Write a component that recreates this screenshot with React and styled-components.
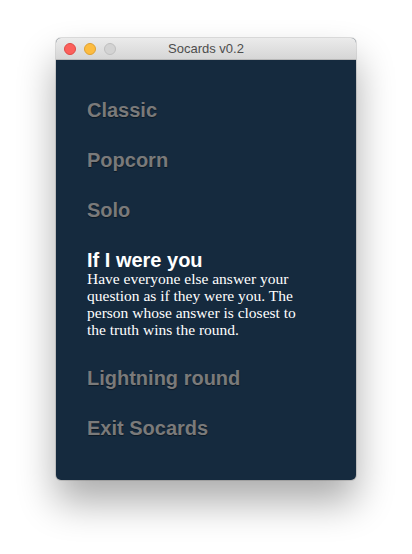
import React, {useState} from "react";
import styled, {createGlobalStyle} from "styled-components";

const GlobalStyle = createGlobalStyle`
    html, body {
        margin: 0;
        padding: 0;
        background: #ffffff;
    }
`;

const Page = styled.div`
    width: 412px;
    height: 554px;
    padding: 38px 0 0 56px;
    box-sizing: border-box;
    background: #ffffff;
`;

const Window = styled.div`
    width: 300px;
    height: 442px;
    border-radius: 5px;
    overflow: hidden;
    display: flex;
    flex-direction: column;
    background: #152a3e;
    box-shadow: 0 0 0 1px rgba(0, 0, 0, 0.12), 0 22px 38px rgba(0, 0, 0, 0.33);
`;

const TitleBar = styled.div`
    height: 22px;
    flex-shrink: 0;
    display: flex;
    align-items: center;
    position: relative;
    background: linear-gradient(#ebebeb, #d6d6d6);
    border-bottom: 1px solid #b8b8b8;
    box-sizing: border-box;
`;

const Lights = styled.div`
    display: flex;
    gap: 8px;
    padding-left: 8px;
`;

const Light = styled.span`
    width: 12px;
    height: 12px;
    border-radius: 50%;
    box-sizing: border-box;
    background: ${p => p.color};
    border: 1px solid ${p => p.border};
`;

const Title = styled.div`
    position: absolute;
    left: 0;
    right: 0;
    text-align: center;
    font-family: "Liberation Sans", Arial, sans-serif;
    font-size: 13px;
    color: #4d4d4d;
    pointer-events: none;
`;

const Menu = styled.div`
    padding: 38px 0 0 31px;
    display: flex;
    flex-direction: column;
`;

const Item = styled.div`
    margin-bottom: 26px;
    cursor: pointer;
`;

const ItemTitle = styled.div`
    font-family: "Liberation Sans", Arial, sans-serif;
    font-weight: bold;
    font-size: 20px;
    line-height: 24px;
    color: ${p => (p.$active ? "#ffffff" : "#7a7a7a")};
    text-shadow: ${p => (p.$active ? "none" : "0 1px 1px rgba(0, 0, 0, 0.45)")};
`;

const Description = styled.div`
    width: 226px;
    margin: -2px 0 2px;
    font-family: "Liberation Serif", "Times New Roman", serif;
    font-size: 15.5px;
    line-height: 17px;
    color: #ffffff;
`;

const modes = [
    {name: "Classic"},
    {name: "Popcorn"},
    {name: "Solo"},
    {
        name: "If I were you",
        text: "Have everyone else answer your question as if they were you. The person whose answer is closest to the truth wins the round."
    },
    {name: "Lightning round"},
    {name: "Exit Socards"}
];

const App = () => {
    const [active, setActive] = useState(3);

    return (
        <Page>
            <GlobalStyle/>
            <Window>
                <TitleBar>
                    <Lights>
                        <Light color="#fc605c" border="#de4a45"/>
                        <Light color="#fdbc40" border="#dea032"/>
                        <Light color="#d3d3d3" border="#bfbfbf"/>
                    </Lights>
                    <Title>Socards v0.2</Title>
                </TitleBar>
                <Menu>
                    {modes.map((m, i) => (
                        <Item key={m.name} onMouseEnter={() => m.text && setActive(i)}>
                            <ItemTitle $active={i === active}>{m.name}</ItemTitle>
                            {i === active && m.text && <Description>{m.text}</Description>}
                        </Item>
                    ))}
                </Menu>
            </Window>
        </Page>
    );
};

export default App;
